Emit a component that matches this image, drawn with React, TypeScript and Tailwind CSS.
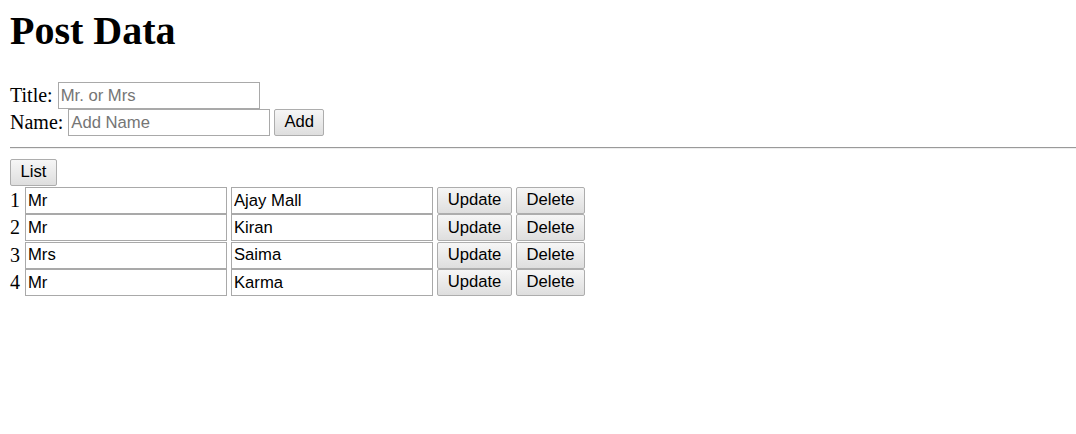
import React from "react";

const rows = [
  { n: 1, t: "Mr", name: "Ajay Mall" },
  { n: 2, t: "Mr", name: "Kiran" },
  { n: 3, t: "Mrs", name: "Saima" },
  { n: 4, t: "Mr", name: "Karma" },
];

const inputCls =
  "box-border w-[202px] h-[27px] border border-[#a9a9a9] bg-white px-[2px] text-[16.67px] text-black outline-none placeholder:text-[#757575] [font-family:'Liberation_Sans',Arial,sans-serif]";

const btnCls =
  "box-border h-[27px] border border-[#adadad] rounded-[2px] bg-gradient-to-b from-[#f6f6f6] to-[#dedede] px-[6px] text-[16.67px] text-black leading-none [font-family:'Liberation_Sans',Arial,sans-serif]";

export default function App() {
  return (
    <div className="min-h-[434px] bg-white text-black [font-family:'Liberation_Serif','Times_New_Roman',serif] text-[20px]">
      <div className="pl-[10px]">
        <h1 className="pt-[8px] h-[54px] text-[40px] font-bold leading-[46px]">
          Post Data
        </h1>
        <div className="mt-[28px] flex items-center h-[27px] leading-[23px]">
          <span>Title:</span>
          <input className={`${inputCls} ml-[5px]`} placeholder="Mr. or Mrs" />
        </div>
        <div className="flex items-center h-[27px] leading-[23px]">
          <span>Name:</span>
          <input className={`${inputCls} ml-[5px]`} placeholder="Add Name" />
          <button className={`${btnCls} ml-[4px] w-[50px]`}>Add</button>
        </div>
      </div>
      <div className="ml-[10px] mt-[11px] border-t border-t-[#9a9a9a] border-b border-b-[#eeeeee]" />
      <div className="pl-[10px] mt-[10px] flex flex-col">
        <div className="flex h-[28px]">
          <button className={`${btnCls} w-[47px]`}>List</button>
        </div>
        {rows.map((r) => (
          <div key={r.n} className="flex items-center h-[27.3px] leading-[23px]">
            <span className="w-[10px]">{r.n}</span>
            <input className={`${inputCls} ml-[5px]`} defaultValue={r.t} />
            <input className={`${inputCls} ml-[4px]`} defaultValue={r.name} />
            <button className={`${btnCls} ml-[4px] w-[75px]`}>Update</button>
            <button className={`${btnCls} ml-[4px] w-[69px]`}>Delete</button>
          </div>
        ))}
      </div>
    </div>
  );
}
